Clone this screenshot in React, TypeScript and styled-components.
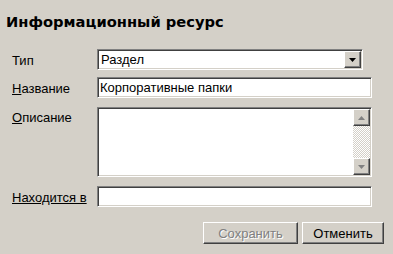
import styled, { createGlobalStyle } from "styled-components";

const GlobalStyle = createGlobalStyle`
  html, body {
    margin: 0;
    padding: 0;
    background: #d4d0c8;
  }
  body {
    font-family: "Liberation Sans", Arial, sans-serif;
    font-size: 13px;
    color: #000;
  }
`;

const Dialog = styled.div`
  width: 393px;
  height: 254px;
  box-sizing: border-box;
  padding: 12px 21px 0 6px;
  background: #d4d0c8;
`;

const Title = styled.h1`
  margin: 0 0 18px 0;
  font-family: "DejaVu Sans", Verdana, sans-serif;
  font-weight: bold;
  font-size: 14.7px;
  line-height: 19px;
  color: #000;
`;

const Form = styled.div`
  display: grid;
  grid-template-columns: 85px 1fr;
  row-gap: 7px;
  padding-left: 6px;
`;

const Label = styled.div<{ $link?: boolean; $top?: boolean }>`
  box-sizing: border-box;
  height: 21px;
  display: flex;
  align-items: ${(p) => (p.$top ? "flex-start" : "center")};
  padding-top: ${(p) => (p.$top ? 5 : 1)}px;
  text-decoration: ${(p) => (p.$link ? "underline" : "none")};
  color: #000;
`;

const Key = styled.span`
  text-decoration: underline;
`;

const Sunken = styled.div<{ $height?: number; $right?: number; $tall?: boolean }>`
  box-sizing: border-box;
  height: ${(p) => p.$height ?? 21}px;
  margin: ${(p) => (p.$tall ? "2px" : "0")} ${(p) => p.$right ?? 0}px
    ${(p) => (p.$tall ? "2px" : "0")} 0;
  background: #fff;
  border: 1px solid;
  border-color: #808080 #fff #fff #808080;
  box-shadow: inset 1px 1px #404040, inset -1px -1px #d4d0c8;
  display: flex;
  align-items: stretch;
`;

const Value = styled.div`
  flex: 1;
  display: flex;
  align-items: center;
  padding: 0 3px;
  white-space: nowrap;
`;

const Raised = styled.div`
  box-sizing: border-box;
  width: 17px;
  margin: 1px 1px 1px 0;
  background: #d4d0c8;
  border: 1px solid;
  border-color: #fff #404040 #404040 #fff;
  box-shadow: inset -1px -1px #808080;
  display: flex;
  align-items: center;
  justify-content: center;
`;

const ScrollBar = styled.div`
  width: 17px;
  margin: 1px 1px 1px 0;
  display: flex;
  flex-direction: column;
  background-color: #fff;
  background-image: repeating-conic-gradient(#d4d0c8 0 25%, #fff 0 50%);
  background-size: 2px 2px;
`;

const ScrollButton = styled(Raised)`
  margin: 0;
  height: 17px;
  width: 17px;
`;

const Track = styled.div`
  flex: 1;
`;

const Arrow = ({ up, color }: { up?: boolean; color: string }) => (
  <svg width="7" height="4" viewBox="0 0 7 4">
    <path d={up ? "M3.5 0 L7 4 L0 4 Z" : "M0 0 L7 0 L3.5 4 Z"} fill={color} />
  </svg>
);

const Buttons = styled.div`
  display: flex;
  justify-content: flex-end;
  gap: 4px;
  margin-top: 15px;
  margin-right: -12px;
`;

const Button = styled.button<{ $width: number }>`
  box-sizing: border-box;
  width: ${(p) => p.$width}px;
  height: 22px;
  padding: 0;
  font-family: "Liberation Sans", Arial, sans-serif;
  font-size: 13px;
  color: #000;
  background: #d4d0c8;
  border: 1px solid;
  border-color: #fff #404040 #404040 #fff;
  box-shadow: inset -1px -1px #808080;
  &:disabled {
    color: #808080;
    text-shadow: 1px 1px #fff;
  }
`;

export default function App() {
  return (
    <>
      <GlobalStyle />
      <Dialog>
        <Title>Информационный ресурс</Title>
        <Form>
          <Label>Тип</Label>
          <Sunken $right={9}>
            <Value>Раздел</Value>
            <Raised>
              <Arrow color="#000" />
            </Raised>
          </Sunken>

          <Label>
            <span>
              <Key>Н</Key>азвание
            </span>
          </Label>
          <Sunken>
            <Value style={{ paddingLeft: 2 }}>Корпоративные папки</Value>
          </Sunken>

          <Label $top>
            <span>
              <Key>О</Key>писание
            </span>
          </Label>
          <Sunken $height={70} $tall>
            <Value />
            <ScrollBar>
              <ScrollButton>
                <Arrow up color="#808080" />
              </ScrollButton>
              <Track />
              <ScrollButton>
                <Arrow color="#808080" />
              </ScrollButton>
            </ScrollBar>
          </Sunken>

          <Label $link>Находится в</Label>
          <Sunken>
            <Value />
          </Sunken>
        </Form>
        <Buttons>
          <Button $width={95} disabled>
            Сохранить
          </Button>
          <Button $width={82}>Отменить</Button>
        </Buttons>
      </Dialog>
    </>
  );
}
